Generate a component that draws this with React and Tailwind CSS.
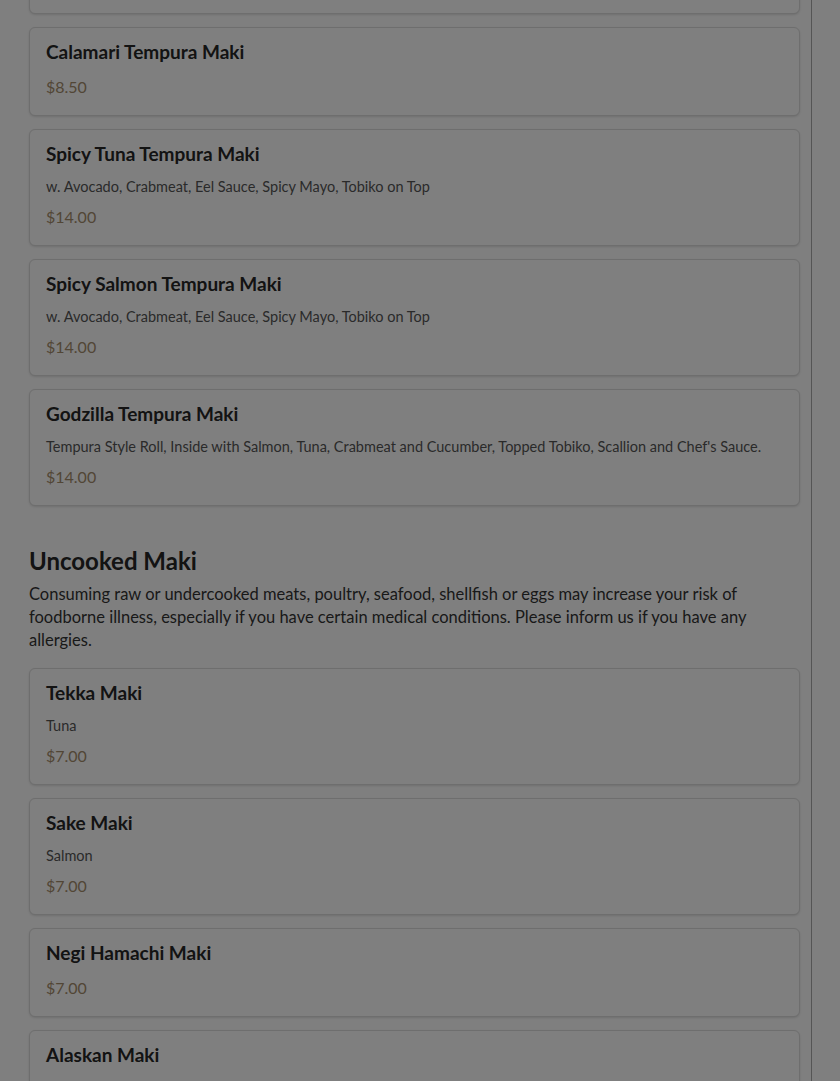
import React from "react";

const tempura = [
  { name: "Shrimp Tempura Maki", price: "$8.50" },
  { name: "Calamari Tempura Maki", price: "$8.50" },
  {
    name: "Spicy Tuna Tempura Maki",
    desc: "w. Avocado, Crabmeat, Eel Sauce, Spicy Mayo, Tobiko on Top",
    price: "$14.00",
  },
  {
    name: "Spicy Salmon Tempura Maki",
    desc: "w. Avocado, Crabmeat, Eel Sauce, Spicy Mayo, Tobiko on Top",
    price: "$14.00",
  },
  {
    name: "Godzilla Tempura Maki",
    desc: "Tempura Style Roll, Inside with Salmon, Tuna, Crabmeat and Cucumber, Topped Tobiko, Scallion and Chef's Sauce.",
    price: "$14.00",
  },
];

const uncooked = [
  { name: "Tekka Maki", desc: "Tuna", price: "$7.00" },
  { name: "Sake Maki", desc: "Salmon", price: "$7.00" },
  { name: "Negi Hamachi Maki", price: "$7.00" },
  { name: "Alaskan Maki", desc: "Salmon, Avocado, Cucumber", price: "$7.00" },
];

const MenuCard = ({ item }) => (
  <div className="bg-white border border-[#dcdcdc] rounded-md shadow-sm px-4 pt-3 pb-4">
    <h3 className="text-[19px] leading-6 font-bold text-[#262626] mb-[11px]">
      {item.name}
    </h3>
    {item.desc && (
      <p className="text-[14.5px] leading-5 text-[#555] mb-2">{item.desc}</p>
    )}
    <div className="text-[16px] leading-6 text-[#a58d6c]">{item.price}</div>
  </div>
);

export default function App() {
  return (
    <div
      className="relative h-[1081px] overflow-hidden bg-white flex"
      style={{ fontFamily: "Lato, 'Noto Sans', sans-serif" }}
    >
      <main className="w-[811px] pl-[29px] pr-[11px]">
        <div className="flex flex-col gap-[13px] -mt-[75px]">
          {tempura.map((item) => (
            <MenuCard key={item.name} item={item} />
          ))}
        </div>

        <section className="mt-[39px]">
          <h2 className="text-[24px] leading-8 font-bold text-[#262626]">
            Uncooked Maki
          </h2>
          <p className="mt-[6px] text-[16.5px] leading-[23px] text-[#333] max-w-[760px]">
            Consuming raw or undercooked meats, poultry, seafood, shellfish or
            eggs may increase your risk of foodborne illness, especially if you
            have certain medical conditions. Please inform us if you have any
            allergies.
          </p>
          <div className="flex flex-col gap-[13px] mt-4">
            {uncooked.map((item) => (
              <MenuCard key={item.name} item={item} />
            ))}
          </div>
        </section>
      </main>
      <aside className="flex-1 border-l border-[#aaa]" />

      {/* modal backdrop */}
      <div className="absolute inset-0 bg-black/50" />
    </div>
  );
}
